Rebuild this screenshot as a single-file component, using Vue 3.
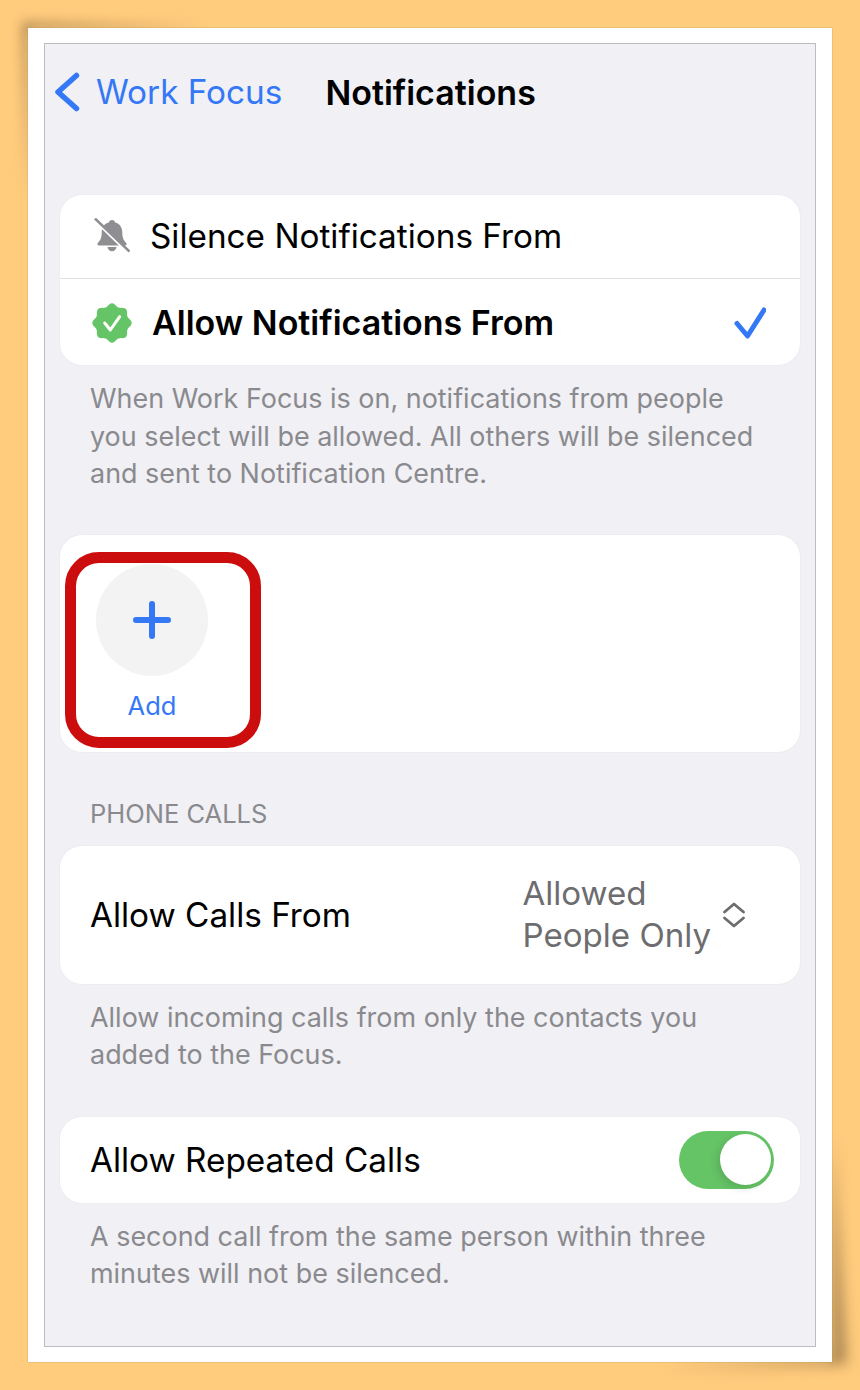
<script setup>
const silenced = 'Silence Notifications From'
const allowed = 'Allow Notifications From'

// Eight-lobed seal outline for the "allowed" badge
const badgePath = Array.from({ length: 96 }, (_, i) => {
  const t = (i / 96) * Math.PI * 2
  const r = 18.2 + 1.5 * Math.cos(8 * t)
  const x = 20 + r * Math.sin(t)
  const y = 20 - r * Math.cos(t)
  return `${i ? 'L' : 'M'}${x.toFixed(2)} ${y.toFixed(2)}`
}).join(' ') + ' Z'
</script>

<template>
  <div class="page">
    <div class="frame">
      <div class="shadow shadow-tl"><i></i></div>
      <div class="shadow shadow-br"><i></i></div>
      <div class="screen">
        <header class="nav">
          <svg class="back" viewBox="0 0 26 40" width="26" height="40">
            <path d="M22.500 3.500 L4 20 L22.500 36.500" />
          </svg>
          <span class="back-label">Work Focus</span>
          <span class="title">Notifications</span>
        </header>

        <section class="card first">
          <div class="row option">
            <svg class="bell" viewBox="0 0 36 36" width="36" height="36">
              <path class="bell-body" d="M18 2c1.700 0 2.900 1 3.100 2.500 4.600 1.200 7.200 5 7.200 9.900 0 5.600 1.500 8 3.900 10.500.8.900.3 2.600-1.100 2.600H4.900c-1.400 0-1.900-1.700-1.100-2.600 2.400-2.500 3.900-4.900 3.900-10.500 0-4.900 2.600-8.700 7.200-9.900C15.100 3 16.300 2 18 2z" />
              <path class="bell-body" d="M13.500 29h9c-.3 2.400-2.100 4.200-4.500 4.200s-4.200-1.800-4.500-4.200z" />
              <path class="bell-gap" d="M2 3 L34 34" />
              <path class="bell-slash" d="M1 0.500 L35.500 33.500" />
            </svg>
            <span class="option-text">{{ silenced }}</span>
          </div>
          <div class="row option selected">
            <svg class="badge" viewBox="0 0 40 40" width="40" height="40">
              <path class="badge-fill" :d="badgePath" />
              <path class="badge-check" d="M12.700 20 L18.300 27 L27.700 13.700" />
            </svg>
            <span class="option-text strong">{{ allowed }}</span>
            <svg class="check" viewBox="0 0 32 32" width="32" height="32">
              <path d="M3 16.500 L13.500 29 L30 3" />
            </svg>
          </div>
        </section>
        <p class="note">When Work Focus is on, notifications from people you select will be allowed. All others will be silenced and sent to Notification Centre.</p>

        <section class="card people">
          <div class="add">
            <div class="add-circle">
              <svg viewBox="0 0 38 38" width="38" height="38">
                <path d="M19 3 V35 M3 19 H35" />
              </svg>
            </div>
            <span class="add-label">Add</span>
          </div>
          <div class="highlight"></div>
        </section>

        <h2 class="section-title">PHONE CALLS</h2>
        <section class="card calls">
          <span class="row-label">Allow Calls From</span>
          <div class="picker">
            <span class="picker-value">Allowed<br />People Only</span>
            <svg class="updown" viewBox="0 0 24 26" width="24" height="26">
              <path d="M2.500 10 L12 2 L21.500 10 M2.500 16 L12 24 L21.500 16" />
            </svg>
          </div>
        </section>
        <p class="note">Allow incoming calls from only the contacts you added to the Focus.</p>

        <section class="card repeated">
          <span class="row-label">Allow Repeated Calls</span>
          <div class="toggle"><div class="knob"></div></div>
        </section>
        <p class="note last">A second call from the same person within three minutes will not be silenced.</p>
      </div>
    </div>
  </div>
</template>

<style>
html, body { margin: 0; background: #ffcb7d; }
</style>

<style scoped>
.page {
  box-sizing: border-box;
  width: 860px;
  height: 1390px;
  padding: 28px;
  background: #ffcb7d;
  font-family: Inter, "Liberation Sans", sans-serif;
  overflow: hidden;
  isolation: isolate;
}
.frame {
  position: relative;
  box-sizing: border-box;
  height: 1334px;
  padding: 15px 16px;
  background: #fff;
  box-shadow: 0 0 1px rgba(120, 100, 70, .7);
}
.shadow {
  position: absolute;
  z-index: -1;
}
.shadow-tl { filter: blur(6px); }
.shadow-br { filter: blur(7px); }
.shadow i { display: block; width: 100%; height: 100%; }
.shadow-tl {
  left: -12px;
  top: -10px;
  width: 200px;
  height: 190px;
}
.shadow-tl i {
  background: rgba(84, 66, 38, .66);
  clip-path: polygon(7px 5px, 190px 10px, 12px 10px, 12px 180px);
}
.shadow-br {
  right: -22px;
  bottom: -14px;
  width: 190px;
  height: 240px;
}
.shadow-br i {
  background: rgba(84, 66, 38, .55);
  clip-path: polygon(168px 0, 182px 228px, 0 231px, 168px 222px);
}
.screen {
  box-sizing: border-box;
  height: 1304px;
  padding: 0 15px;
  background: #f0f0f5;
  border: 1px solid #bcbcc0;
}
.nav {
  display: flex;
  align-items: center;
  height: 96px;
  margin-left: -6px;
}
.back { margin-right: 16px; flex: none; }
.back path {
  fill: none;
  stroke: #3478f6;
  stroke-width: 5.500;
  stroke-linecap: round;
  stroke-linejoin: round;
}
.back-label { font-size: 33.300px; color: #3478f6; }
.title { margin-left: 43px; font-size: 34px; font-weight: 600; color: #000; }
.card {
  background: #fff;
  border-radius: 22px;
  box-shadow: 0 0 0 1px #ececf1;
}
.first { margin-top: 55px; }
.row { display: flex; align-items: center; }
.option { height: 82px; padding: 0 0 1px 34px; }
.selected {
  height: 85px;
  padding: 1px 34px 0 32px;
  border-top: 1px solid #e2e2e6;
}
.bell { flex: none; margin-right: 20px; }
.bell-body { fill: #8e8e93; }
.bell-gap { stroke: #fff; stroke-width: 3.500; fill: none; }
.bell-slash { stroke: #8e8e93; stroke-width: 2.500; fill: none; }
.badge { flex: none; margin-right: 20px; }
.badge-fill { fill: #65c466; }
.badge-check, .check path, .add-circle path {
  fill: none;
  stroke-linecap: round;
  stroke-linejoin: round;
}
.badge-check { stroke: #fff; stroke-width: 3; }
.option-text { font-size: 33.300px; color: #000; }
.strong { font-size: 34px; font-weight: 600; flex: 1; }
.check { flex: none; }
.check path { stroke: #3478f6; stroke-width: 5; }
.note {
  margin: 15px 0 0;
  padding: 0 45px 0 30px;
  font-size: 26.950px;
  line-height: 37.500px;
  color: #8a8a8e;
}
.note.last { margin-top: 15px; }
.people {
  position: relative;
  height: 217px;
  margin-top: 42px;
}
.add {
  display: flex;
  flex-direction: column;
  align-items: center;
  width: 112px;
  padding: 29px 0 0 36px;
}
.add-circle {
  display: flex;
  align-items: center;
  justify-content: center;
  width: 112px;
  height: 112px;
  border-radius: 50%;
  background: #f3f3f3;
}
.add-circle path { stroke: #3478f6; stroke-width: 6; }
.add-label { margin-top: 15px; font-size: 25.500px; line-height: 30px; color: #3478f6; }
.highlight {
  position: absolute;
  box-sizing: border-box;
  left: 5px;
  top: 17px;
  width: 196px;
  height: 196px;
  border: 11px solid #cb0d0d;
  border-radius: 34px;
}
.section-title {
  margin: 47px 0 0;
  padding: 0 30px;
  font-size: 25.500px;
  line-height: 30px;
  font-weight: 400;
  color: #8a8a8e;
}
.calls {
  display: flex;
  align-items: center;
  justify-content: space-between;
  height: 138px;
  margin-top: 17px;
  padding: 0 54px 0 30px;
}
.row-label { font-size: 33.300px; color: #000; }
.picker { display: flex; align-items: center; gap: 11px; }
.picker-value { font-size: 33.100px; line-height: 41.500px; color: #6d6d70; }
.updown path {
  fill: none;
  stroke: #6d6d70;
  stroke-width: 2.800;
  stroke-linecap: round;
  stroke-linejoin: round;
}
.repeated {
  display: flex;
  align-items: center;
  justify-content: space-between;
  height: 86px;
  margin-top: 43px;
  padding: 0 26px 0 30px;
}
.toggle {
  display: flex;
  align-items: center;
  justify-content: flex-end;
  box-sizing: border-box;
  width: 95px;
  height: 58px;
  padding-right: 3px;
  border-radius: 29px;
  background: #65c466;
}
.knob {
  width: 51px;
  height: 51px;
  border-radius: 50%;
  background: #fff;
  box-shadow: -3px 3px 8px rgba(0, 0, 0, .12);
}
</style>
